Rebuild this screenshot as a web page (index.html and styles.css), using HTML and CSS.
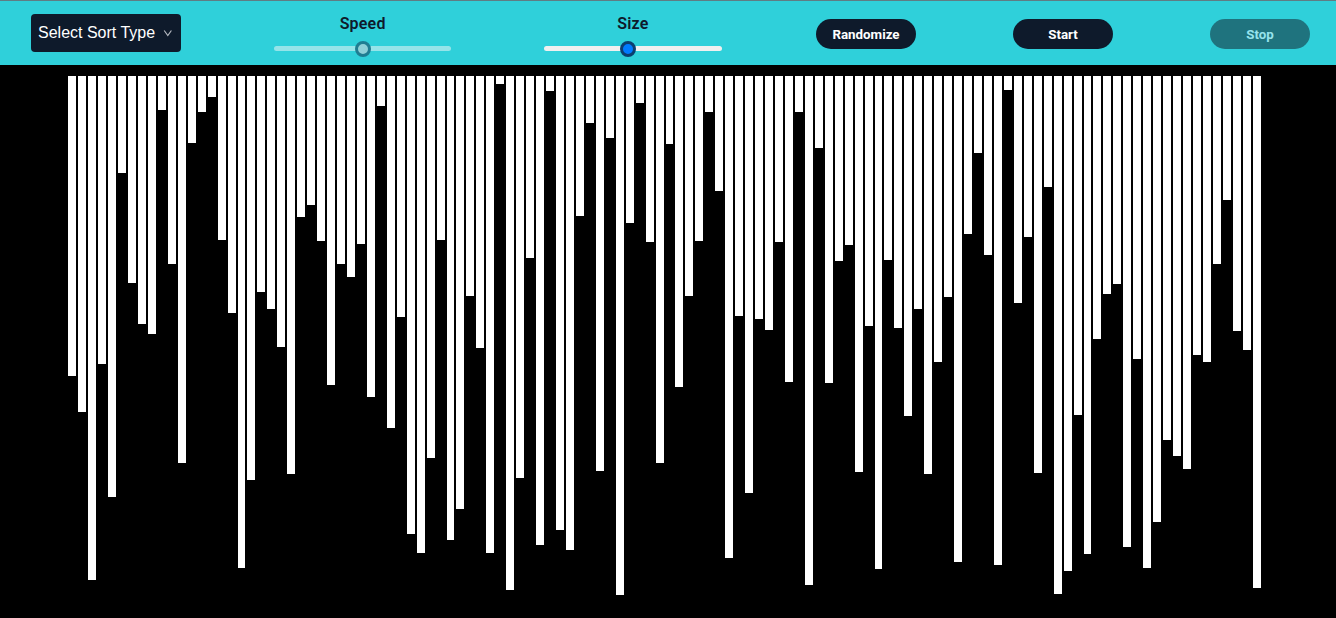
FILE: index.html
```html
<!DOCTYPE html>
<html lang="en">
<head>
<meta charset="utf-8">
<title>Sorting Visualizer</title>
<link rel="stylesheet" href="styles.css">
</head>
<body>
<header class="toolbar">
  <div class="controls">
    <div class="sort-select">
      <span>Select Sort Type</span>
      <svg class="chevron" width="10" height="8" viewBox="0 0 10 8"><polyline points="1.2,1.5 4.8,6.5 8.4,1.5"/></svg>
    </div>
    <label class="slider-group">
      <span class="slider-label">Speed</span>
      <input class="slider slider-off" type="range" min="0" max="100" value="50" disabled>
    </label>
    <label class="slider-group">
      <span class="slider-label">Size</span>
      <input class="slider slider-on" type="range" min="0" max="100" value="47">
    </label>
  </div>
  <div class="actions">
    <button class="btn" type="button">Randomize</button>
    <button class="btn" type="button">Start</button>
    <button class="btn btn-off" type="button" disabled>Stop</button>
  </div>
</header>
<main class="chart">
<div class="bar" style="height:300px"></div><div class="bar" style="height:336px"></div><div class="bar" style="height:504px"></div><div class="bar" style="height:288px"></div><div class="bar" style="height:421px"></div><div class="bar" style="height:97px"></div><div class="bar" style="height:207px"></div><div class="bar" style="height:248px"></div><div class="bar" style="height:258px"></div><div class="bar" style="height:34px"></div>
<div class="bar" style="height:188px"></div><div class="bar" style="height:387px"></div><div class="bar" style="height:67px"></div><div class="bar" style="height:36px"></div><div class="bar" style="height:21px"></div><div class="bar" style="height:164px"></div><div class="bar" style="height:237px"></div><div class="bar" style="height:492px"></div><div class="bar" style="height:404px"></div><div class="bar" style="height:216px"></div>
<div class="bar" style="height:233px"></div><div class="bar" style="height:271px"></div><div class="bar" style="height:398px"></div><div class="bar" style="height:141px"></div><div class="bar" style="height:129px"></div><div class="bar" style="height:165px"></div><div class="bar" style="height:309px"></div><div class="bar" style="height:188px"></div><div class="bar" style="height:201px"></div><div class="bar" style="height:168px"></div>
<div class="bar" style="height:321px"></div><div class="bar" style="height:30px"></div><div class="bar" style="height:352px"></div><div class="bar" style="height:241px"></div><div class="bar" style="height:458px"></div><div class="bar" style="height:477px"></div><div class="bar" style="height:382px"></div><div class="bar" style="height:164px"></div><div class="bar" style="height:464px"></div><div class="bar" style="height:433px"></div>
<div class="bar" style="height:220px"></div><div class="bar" style="height:272px"></div><div class="bar" style="height:477px"></div><div class="bar" style="height:8px"></div><div class="bar" style="height:514px"></div><div class="bar" style="height:402px"></div><div class="bar" style="height:182px"></div><div class="bar" style="height:469px"></div><div class="bar" style="height:15px"></div><div class="bar" style="height:454px"></div>
<div class="bar" style="height:474px"></div><div class="bar" style="height:140px"></div><div class="bar" style="height:47px"></div><div class="bar" style="height:395px"></div><div class="bar" style="height:62px"></div><div class="bar" style="height:519px"></div><div class="bar" style="height:147px"></div><div class="bar" style="height:27px"></div><div class="bar" style="height:166px"></div><div class="bar" style="height:387px"></div>
<div class="bar" style="height:68px"></div><div class="bar" style="height:311px"></div><div class="bar" style="height:220px"></div><div class="bar" style="height:165px"></div><div class="bar" style="height:36px"></div><div class="bar" style="height:115px"></div><div class="bar" style="height:482px"></div><div class="bar" style="height:240px"></div><div class="bar" style="height:417px"></div><div class="bar" style="height:243px"></div>
<div class="bar" style="height:254px"></div><div class="bar" style="height:166px"></div><div class="bar" style="height:306px"></div><div class="bar" style="height:36px"></div><div class="bar" style="height:509px"></div><div class="bar" style="height:72px"></div><div class="bar" style="height:307px"></div><div class="bar" style="height:185px"></div><div class="bar" style="height:169px"></div><div class="bar" style="height:396px"></div>
<div class="bar" style="height:250px"></div><div class="bar" style="height:493px"></div><div class="bar" style="height:184px"></div><div class="bar" style="height:252px"></div><div class="bar" style="height:340px"></div><div class="bar" style="height:233px"></div><div class="bar" style="height:398px"></div><div class="bar" style="height:286px"></div><div class="bar" style="height:221px"></div><div class="bar" style="height:486px"></div>
<div class="bar" style="height:158px"></div><div class="bar" style="height:77px"></div><div class="bar" style="height:179px"></div><div class="bar" style="height:489px"></div><div class="bar" style="height:14px"></div><div class="bar" style="height:227px"></div><div class="bar" style="height:161px"></div><div class="bar" style="height:397px"></div><div class="bar" style="height:111px"></div><div class="bar" style="height:518px"></div>
<div class="bar" style="height:495px"></div><div class="bar" style="height:339px"></div><div class="bar" style="height:478px"></div><div class="bar" style="height:263px"></div><div class="bar" style="height:218px"></div><div class="bar" style="height:208px"></div><div class="bar" style="height:471px"></div><div class="bar" style="height:283px"></div><div class="bar" style="height:492px"></div><div class="bar" style="height:446px"></div>
<div class="bar" style="height:364px"></div><div class="bar" style="height:380px"></div><div class="bar" style="height:393px"></div><div class="bar" style="height:279px"></div><div class="bar" style="height:286px"></div><div class="bar" style="height:188px"></div><div class="bar" style="height:124px"></div><div class="bar" style="height:255px"></div><div class="bar" style="height:274px"></div><div class="bar" style="height:512px"></div>
</main>
</body>
</html>
```
FILE: styles.css
```css
* { box-sizing: border-box; }

html, body {
  margin: 0;
  height: 100%;
  background: #000;
  overflow: hidden;
}

.toolbar {
  display: flex;
  align-items: flex-start;
  height: 65px;
  padding-left: 31px;
  background: #2fd0da;
  border-top: 1px solid #5f7d84;
}

.controls {
  display: flex;
  align-items: flex-start;
  gap: 93px;
  padding-top: 13px;
}

.sort-select {
  display: flex;
  align-items: center;
  justify-content: space-between;
  width: 150px;
  height: 38px;
  padding: 0 8px 0 7px;
  border-radius: 4px;
  background: #0e1a2b;
  color: #fff;
  font: 16px "Liberation Sans", Arial, sans-serif;
}

.chevron {
  flex: none;
  margin-top: -1px;
}

.chevron polyline {
  fill: none;
  stroke: #b4b8bf;
  stroke-width: 1.2;
}

.slider-group {
  display: flex;
  flex-direction: column;
  align-items: center;
  width: 177.25px;
}

.slider-label {
  color: #0e1a2b;
  font: 600 16px/20px Roboto, sans-serif;
  letter-spacing: 0.2px;
}

.slider {
  -webkit-appearance: none;
  appearance: none;
  display: block;
  width: 100%;
  height: 15px;
  margin: 7px 0 0;
  background: transparent;
}

.slider::-webkit-slider-runnable-track {
  height: 5px;
  border-radius: 3px;
}

.slider::-webkit-slider-thumb {
  -webkit-appearance: none;
  appearance: none;
  width: 16px;
  height: 16px;
  margin-top: -5px;
  border-radius: 50%;
  border-style: solid;
  border-width: 3px;
}

.slider-on::-webkit-slider-runnable-track { background: #f0f0f0; }
.slider-on::-webkit-slider-thumb { background: #007bff; border-color: #0b3f70; }

.slider-off::-webkit-slider-runnable-track { background: #95e4e9; }
.slider-off::-webkit-slider-thumb { background: #8fd0d8; border-color: #1f7d92; }

.actions {
  display: flex;
  gap: 97px;
  margin-left: 94.5px;
  padding-top: 18px;
}

.btn {
  width: 100px;
  height: 30px;
  padding: 0;
  border: 0;
  border-radius: 15px;
  background: #0e1a2b;
  color: #fff;
  font: 700 13.33px Roboto, sans-serif;
}

.btn-off {
  background: #1f737e;
  color: #96e3ec;
}

.chart {
  display: flex;
  align-items: flex-start;
  margin-top: 11px;
  padding-left: 67.32px;
}

.bar {
  flex: none;
  width: 7.9532px;
  margin: 0 1px;
  background: #fff;
}
```
